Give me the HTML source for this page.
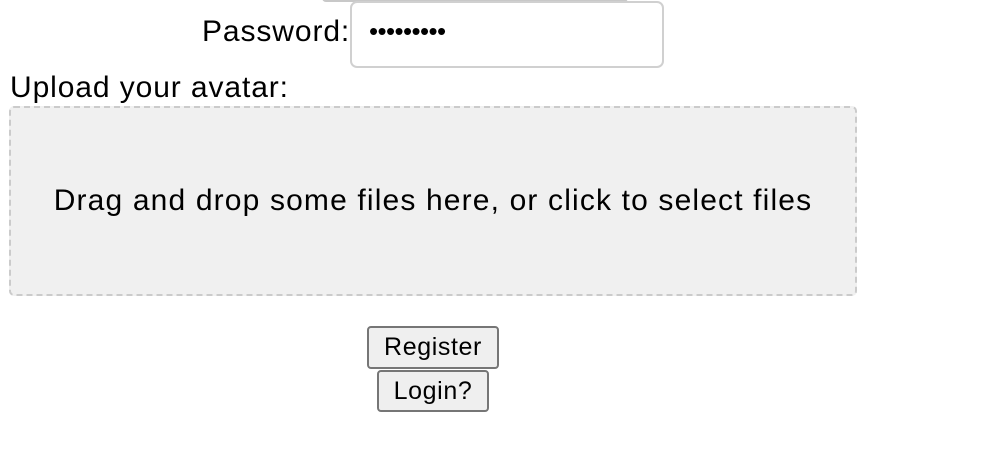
<!DOCTYPE html>
<html><head><meta charset="utf-8"><style>
body{margin:0;width:1000px;height:472px;background:#fff;position:relative;overflow:hidden;font-family:"Liberation Sans",Arial,sans-serif;color:#000}
.a{position:absolute;white-space:nowrap}
.top{left:322px;top:-4px;width:306px;height:4px;border-bottom:2px solid #c8c8c8;border-radius:0 0 4px 4px}
.lbl{font-size:30px;line-height:32px;letter-spacing:0.9px}
.inp{left:350px;top:1px;width:310px;height:63px;border:2px solid #d0d0d0;border-radius:7px;box-sizing:content-box}
.dots{left:369px;top:17px;font-size:26px;letter-spacing:-0.6px;line-height:28px}
.dz{left:9px;top:106px;width:844px;height:186px;border:2px dashed #cbcbcb;border-radius:5px;background:#f0f0f0;display:flex;align-items:center;justify-content:center;font-size:30px;letter-spacing:1.15px}
.btn{background:#efefef;border:2px solid #767676;border-radius:4px;font-size:25px;letter-spacing:0.6px;display:flex;align-items:center;justify-content:center;box-sizing:border-box}
</style></head><body>
<div class="a top"></div>
<div class="a lbl" style="left:202px;top:16px">Password:</div>
<div class="a inp"></div>
<div class="a dots">•••••••••</div>
<div class="a lbl" style="left:10px;top:72px">Upload your avatar:</div>
<div class="a dz">Drag and drop some files here, or click to select files</div>
<div class="a btn" style="left:367px;top:326px;width:132px;height:43px">Register</div>
<div class="a btn" style="left:377px;top:370px;width:112px;height:42px">Login?</div>
</body></html>
